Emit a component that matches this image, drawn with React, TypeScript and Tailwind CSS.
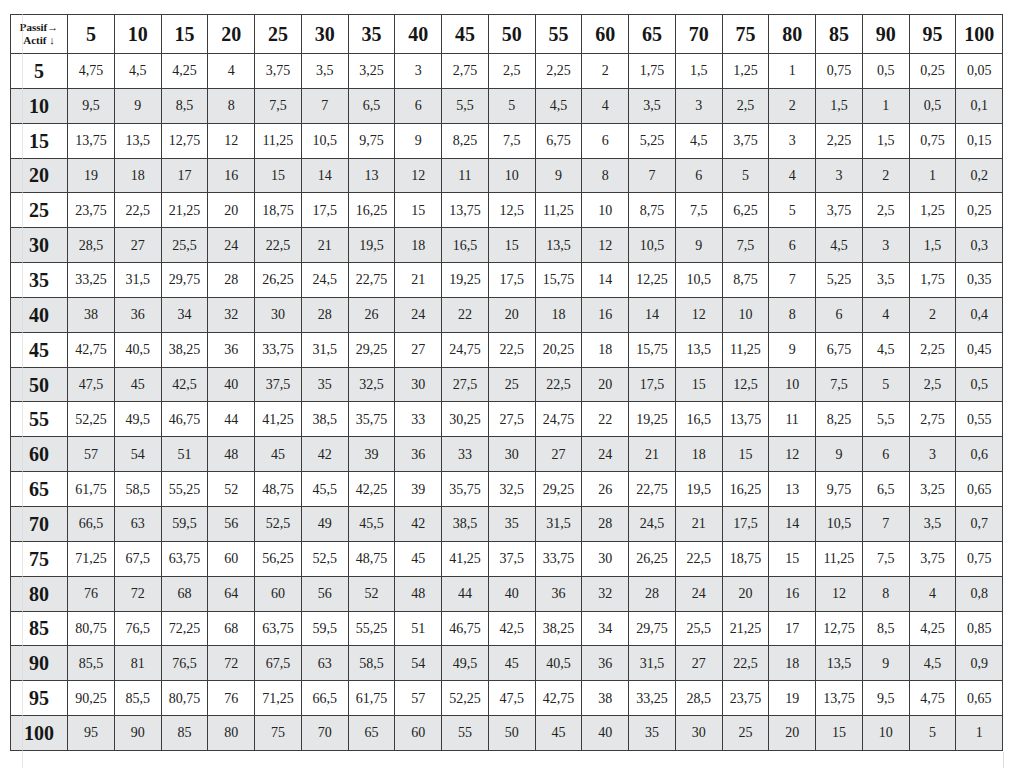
const cols = [5, 10, 15, 20, 25, 30, 35, 40, 45, 50, 55, 60, 65, 70, 75, 80, 85, 90, 95, 100];

const rows: [number, string][] = [
  [5, "4,75 4,5 4,25 4 3,75 3,5 3,25 3 2,75 2,5 2,25 2 1,75 1,5 1,25 1 0,75 0,5 0,25 0,05"],
  [10, "9,5 9 8,5 8 7,5 7 6,5 6 5,5 5 4,5 4 3,5 3 2,5 2 1,5 1 0,5 0,1"],
  [15, "13,75 13,5 12,75 12 11,25 10,5 9,75 9 8,25 7,5 6,75 6 5,25 4,5 3,75 3 2,25 1,5 0,75 0,15"],
  [20, "19 18 17 16 15 14 13 12 11 10 9 8 7 6 5 4 3 2 1 0,2"],
  [25, "23,75 22,5 21,25 20 18,75 17,5 16,25 15 13,75 12,5 11,25 10 8,75 7,5 6,25 5 3,75 2,5 1,25 0,25"],
  [30, "28,5 27 25,5 24 22,5 21 19,5 18 16,5 15 13,5 12 10,5 9 7,5 6 4,5 3 1,5 0,3"],
  [35, "33,25 31,5 29,75 28 26,25 24,5 22,75 21 19,25 17,5 15,75 14 12,25 10,5 8,75 7 5,25 3,5 1,75 0,35"],
  [40, "38 36 34 32 30 28 26 24 22 20 18 16 14 12 10 8 6 4 2 0,4"],
  [45, "42,75 40,5 38,25 36 33,75 31,5 29,25 27 24,75 22,5 20,25 18 15,75 13,5 11,25 9 6,75 4,5 2,25 0,45"],
  [50, "47,5 45 42,5 40 37,5 35 32,5 30 27,5 25 22,5 20 17,5 15 12,5 10 7,5 5 2,5 0,5"],
  [55, "52,25 49,5 46,75 44 41,25 38,5 35,75 33 30,25 27,5 24,75 22 19,25 16,5 13,75 11 8,25 5,5 2,75 0,55"],
  [60, "57 54 51 48 45 42 39 36 33 30 27 24 21 18 15 12 9 6 3 0,6"],
  [65, "61,75 58,5 55,25 52 48,75 45,5 42,25 39 35,75 32,5 29,25 26 22,75 19,5 16,25 13 9,75 6,5 3,25 0,65"],
  [70, "66,5 63 59,5 56 52,5 49 45,5 42 38,5 35 31,5 28 24,5 21 17,5 14 10,5 7 3,5 0,7"],
  [75, "71,25 67,5 63,75 60 56,25 52,5 48,75 45 41,25 37,5 33,75 30 26,25 22,5 18,75 15 11,25 7,5 3,75 0,75"],
  [80, "76 72 68 64 60 56 52 48 44 40 36 32 28 24 20 16 12 8 4 0,8"],
  [85, "80,75 76,5 72,25 68 63,75 59,5 55,25 51 46,75 42,5 38,25 34 29,75 25,5 21,25 17 12,75 8,5 4,25 0,85"],
  [90, "85,5 81 76,5 72 67,5 63 58,5 54 49,5 45 40,5 36 31,5 27 22,5 18 13,5 9 4,5 0,9"],
  [95, "90,25 85,5 80,75 76 71,25 66,5 61,75 57 52,25 47,5 42,75 38 33,25 28,5 23,75 19 13,75 9,5 4,75 0,65"],
  [100, "95 90 85 80 75 70 65 60 55 50 45 40 35 30 25 20 15 10 5 1"],
];

export default function App() {
  return (
    <div className="relative h-[768px] w-[1024px] overflow-hidden bg-white pl-[10px] pt-[14px] font-['Liberation_Serif',serif] text-[#161616]">
      <table className="w-[993px] table-fixed border-collapse font-['Liberation_Serif',serif]">
        <colgroup>
          <col className="w-[57px]" />
          {cols.map((c) => (
            <col key={c} />
          ))}
        </colgroup>
        <thead>
          <tr className="h-[39px]">
            <th className="border border-[#3c3c3c] p-0 text-center text-[11px] leading-[13px] font-bold">
              Passif→
              <br />
              Actif ↓
            </th>
            {cols.map((c) => (
              <th key={c} className="border border-[#3c3c3c] p-0 text-center text-[20px] font-bold">
                {c}
              </th>
            ))}
          </tr>
        </thead>
        <tbody>
          {rows.map(([r, vals], i) => (
            <tr key={r} className={`h-[34.85px] ${i % 2 === 1 ? "bg-[#e4e6e7]" : "bg-white"}`}>
              <th className="border border-[#3c3c3c] p-0 text-center text-[20px] font-bold">{r}</th>
              {vals.split(" ").map((v, j) => (
                <td key={j} className="border border-[#3c3c3c] p-0 text-center font-['Liberation_Serif',serif] text-[14px] text-[#222]">
                  {v}
                </td>
              ))}
            </tr>
          ))}
        </tbody>
      </table>
      <div className="pointer-events-none absolute left-[22px] top-[14px] h-[754px] w-px bg-[#d8d8d8]/60" />
      <div className="pointer-events-none absolute left-[1003px] top-[752px] h-[16px] w-px bg-[#dcdcdc]" />
    </div>
  );
}
